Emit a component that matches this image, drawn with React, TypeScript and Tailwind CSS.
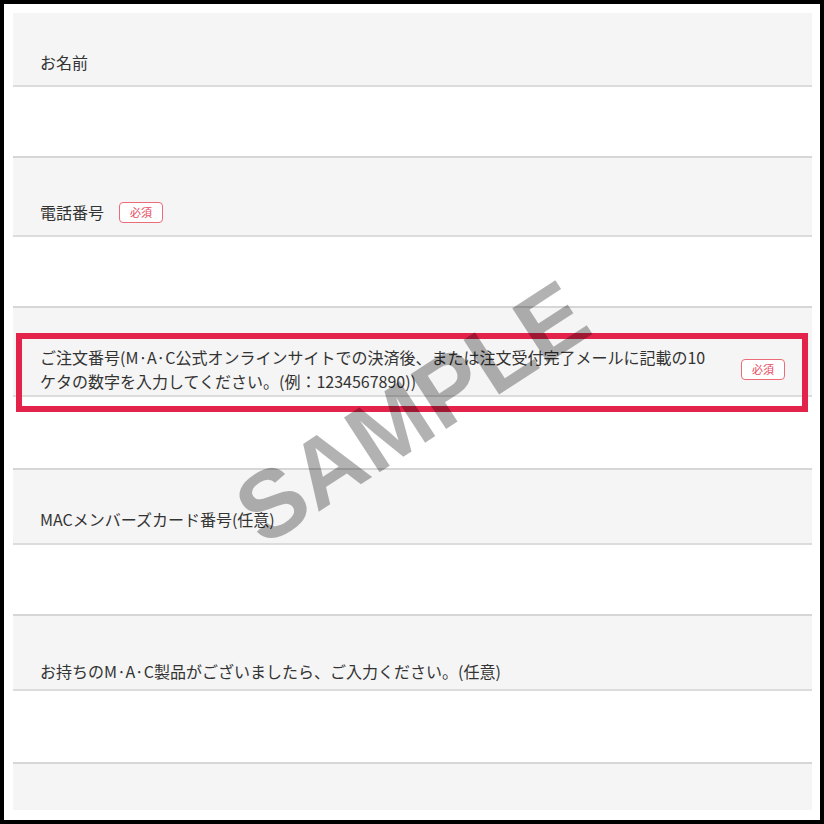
const fields = [
  {
    label: "お名前",
    required: false,
    head: "h-[74px] pb-[11px]",
    body: "h-[71px]",
  },
  {
    label: "電話番号",
    required: true,
    head: "h-[79px] pb-[11px]",
    body: "h-[71px]",
  },
  {
    label: "ご注文番号(M·A·C公式オンラインサイトでの決済後、または注文受付完了メールに記載の10",
    label2: "ケタの数字を入力してください。(例：1234567890))",
    required: true,
    wide: true,
    head: "h-[89px] pb-[2px]",
    body: "h-[73px]",
  },
  {
    label: "MACメンバーズカード番号(任意)",
    required: false,
    head: "h-[75px] pb-[12px]",
    body: "h-[71px]",
  },
  {
    label: "お持ちのM·A·C製品がございましたら、ご入力ください。(任意)",
    required: false,
    head: "h-[75px] pb-[6px]",
    body: "h-[73px]",
  },
];

const RequiredBadge = () => (
  <span className="flex h-[21px] shrink-0 items-center rounded-[4px] border border-[#ec6b78] bg-white px-[10px] text-[11px] leading-none text-[#e5485a]">
    必須
  </span>
);

export default function App() {
  return (
    <div
      className="relative h-[824px] w-[824px] overflow-hidden border-4 border-black bg-white pl-[9px] pr-[8px] pt-[9px] text-[#333]"
      style={{ fontFamily: '"Noto Sans CJK JP", "Noto Sans", sans-serif' }}
    >
      <div className="flex flex-col">
        {fields.map((f) => (
          <div key={f.label} className="flex flex-col">
            <div
              className={`flex items-end border-b-2 border-[#dcdcdc] bg-[#f5f5f5] pl-[27px] pr-[27px] ${f.head}`}
            >
              {f.wide ? (
                <div className="flex w-full items-center justify-between">
                  <p className="text-[16px] leading-[24px]">
                    {f.label}
                    <br />
                    {f.label2}
                  </p>
                  <RequiredBadge />
                </div>
              ) : (
                <div className="flex items-center gap-[15px]">
                  <p className="text-[16px] leading-[24px]">{f.label}</p>
                  {f.required && <RequiredBadge />}
                </div>
              )}
            </div>
            <div className={`border-b-2 border-[#d6d6d6] bg-white ${f.body}`} />
          </div>
        ))}
        <div className="h-[46px] bg-[#f5f5f5]" />
      </div>

      {/* highlight frame around the order number label */}
      <div className="absolute left-[12px] top-[329px] h-[79px] w-[792px] border-[6px] border-[#e3234a]" />

      {/* watermark */}
      <div className="pointer-events-none absolute inset-0 flex items-center justify-center">
        <span
          className="rotate-[-33deg] text-[95px] font-bold leading-none text-black/30"
          style={{ fontFamily: '"Liberation Sans", Arial, sans-serif' }}
        >
          SAMPLE
        </span>
      </div>
    </div>
  );
}
